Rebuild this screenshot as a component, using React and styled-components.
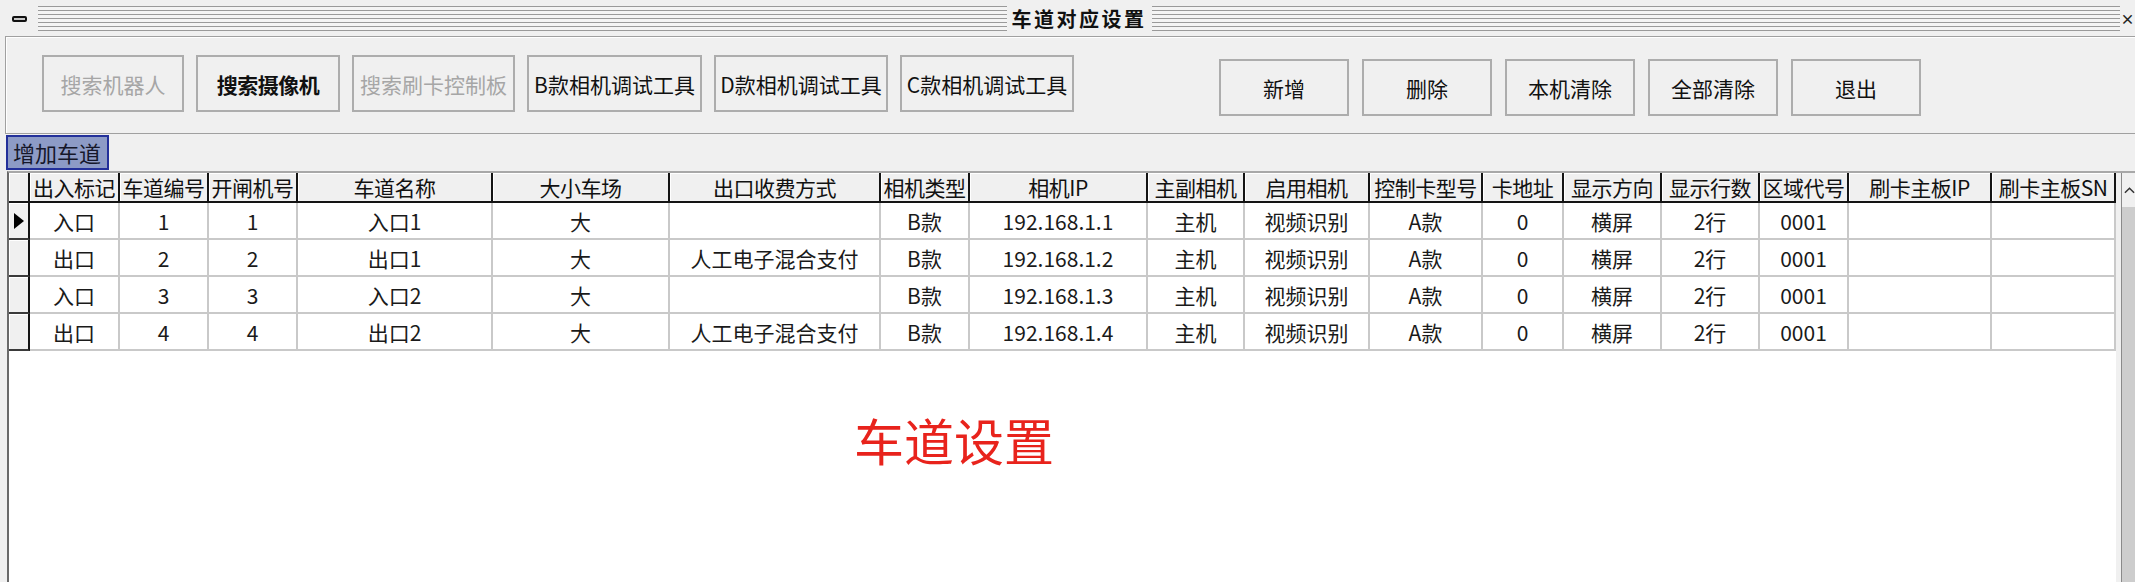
import React from "react";
import styled, { createGlobalStyle } from "styled-components";

const FONT = `"Noto Sans CJK SC", "Noto Sans", sans-serif`;

const GlobalStyle = createGlobalStyle`
  html, body { margin: 0; padding: 0; background: #f0f0f0; overflow: hidden; }
  body { font-family: ${FONT}; }
  #root { width: 2135px; height: 582px; }
  * { box-sizing: border-box; }
`;

const Window = styled.div`
  width: 2135px;
  height: 582px;
  display: flex;
  flex-direction: column;
  background: #f0f0f0;
  overflow: hidden;
`;

const TitleBar = styled.div`
  height: 36px;
  flex-shrink: 0;
  display: flex;
  align-items: center;
  padding-left: 12px;
`;

const MinButton = styled.span`
  width: 15px;
  height: 6px;
  border: 2px solid #111;
  border-radius: 2px;
  background: #c8c8c8;
  margin-right: 11px;
  margin-top: 1px;
`;

const Stripes = styled.div`
  flex: 1;
  height: 25px;
  display: flex;
  align-items: center;
  justify-content: center;
  background: repeating-linear-gradient(
    to bottom,
    #9a9a9a 0px,
    #9a9a9a 1.5px,
    #f4f4f4 1.5px,
    #f4f4f4 4px
  );
`;

const Title = styled.span`
  background: #f0f0f0;
  padding: 0 5px;
  font-size: 20px;
  font-weight: 700;
  letter-spacing: 2.5px;
  line-height: 25px;
  color: #111;
`;

const CloseGlyph = styled.span`
  width: 15px;
  text-align: center;
  font-size: 14px;
  font-weight: 700;
  color: #222;
  line-height: 25px;
`;

const Toolbar = styled.div`
  margin-left: 5px;
  height: 98px;
  flex-shrink: 0;
  display: flex;
  align-items: flex-start;
  padding: 18px 0 0 36px;
  border-top: 1px solid #a0a0a0;
  border-left: 1px solid #a0a0a0;
  border-bottom: 1px solid #a0a0a0;
  box-shadow: inset 1px 1px 0 #ffffff;
`;

const ButtonGroup = styled.div`
  display: flex;
  gap: ${(p) => p.$gap}px;
  margin-left: ${(p) => p.$offset || 0}px;
  margin-top: ${(p) => p.$drop || 0}px;
`;

const ToolButton = styled.button`
  width: ${(p) => p.$w}px;
  height: 57px;
  padding: 0;
  border: 2px solid #adadad;
  background: #f0f0f0;
  font-family: ${FONT};
  font-size: 21px;
  font-weight: ${(p) => (p.$bold ? 700 : 400)};
  color: ${(p) => (p.$disabled ? "#a6a6a6" : "#111")};
  white-space: nowrap;
  display: flex;
  align-items: center;
  justify-content: center;
  letter-spacing: ${(p) => (p.$bold ? "-0.5px" : "0")};
`;

const AddLaneTag = styled.div`
  margin: 1px 0 0 6px;
  width: 103px;
  height: 35px;
  flex-shrink: 0;
  border: 2px solid #23309a;
  background: #8d9bc6;
  color: #15172a;
  font-size: 22px;
  line-height: 30px;
  padding-left: 5px;
  white-space: nowrap;
`;

const GridFrame = styled.div`
  flex: 1;
  margin: 1px 0 0 7px;
  display: flex;
  border-top: 2px solid #a8a8a8;
  border-left: 2px solid #6a6a6a;
  min-height: 0;
`;

const GridBody = styled.div`
  position: relative;
  flex: 1;
  background: #ffffff;
`;

const COLS = [21, 90, 89, 89, 195, 177, 211, 89, 178, 97, 125, 113, 81, 98, 98, 89, 143, 124];
const TEMPLATE = COLS.map((c) => `${c}px`).join(" ");

const Row = styled.div`
  display: grid;
  grid-template-columns: ${TEMPLATE};
  height: ${(p) => p.$h}px;
`;

const HeadCell = styled.div`
  background: #f0f0f0;
  border-right: 2px solid #141414;
  border-bottom: 2px solid #141414;
  box-shadow: inset 1px 1px 0 #ffffff;
  display: flex;
  align-items: center;
  justify-content: center;
  font-size: 21px;
  color: #111;
  white-space: nowrap;
  overflow: hidden;
  letter-spacing: -0.5px;
`;

const Indicator = styled.div`
  background: #f0f0f0;
  border-right: 2px solid #141414;
  border-bottom: 2px solid #3a3a3a;
  box-shadow: inset 1px 1px 0 #ffffff;
  display: flex;
  align-items: center;
  padding-left: 5px;
`;

const Cell = styled.div`
  border-right: 2px solid #c9c9c9;
  border-bottom: 2px solid #c9c9c9;
  display: flex;
  align-items: center;
  justify-content: center;
  font-size: 21px;
  color: #1a1a1a;
  white-space: nowrap;
  overflow: hidden;
`;

const Watermark = styled.div`
  position: absolute;
  left: 845px;
  top: 241px;
  font-size: 50px;
  line-height: 50px;
  color: #e8231c;
  white-space: nowrap;
  pointer-events: none;
`;

const ScrollBar = styled.div`
  width: 14px;
  flex-shrink: 0;
  display: flex;
  flex-direction: column;
  border-left: 1px solid #8a8a8a;
  margin-left: 5px;
`;

const ScrollUp = styled.div`
  height: 34px;
  background: #f0f0f0;
  display: flex;
  align-items: center;
  justify-content: flex-start;
  padding-left: 2px;
`;

const ScrollTrack = styled.div`
  flex: 1;
  background: #cdcdcd;
`;

const HEADERS = [
  "出入标记", "车道编号", "开闸机号", "车道名称", "大小车场", "出口收费方式",
  "相机类型", "相机IP", "主副相机", "启用相机", "控制卡型号", "卡地址",
  "显示方向", "显示行数", "区域代号", "刷卡主板IP", "刷卡主板SN",
];

const ROWS = [
  ["入口", "1", "1", "入口1", "大", "", "B款", "192.168.1.1", "主机", "视频识别", "A款", "0", "横屏", "2行", "0001", "", ""],
  ["出口", "2", "2", "出口1", "大", "人工电子混合支付", "B款", "192.168.1.2", "主机", "视频识别", "A款", "0", "横屏", "2行", "0001", "", ""],
  ["入口", "3", "3", "入口2", "大", "", "B款", "192.168.1.3", "主机", "视频识别", "A款", "0", "横屏", "2行", "0001", "", ""],
  ["出口", "4", "4", "出口2", "大", "人工电子混合支付", "B款", "192.168.1.4", "主机", "视频识别", "A款", "0", "横屏", "2行", "0001", "", ""],
];

const LEFT_BUTTONS = [
  { label: "搜索机器人", w: 142, disabled: true },
  { label: "搜索摄像机", w: 144, bold: true },
  { label: "搜索刷卡控制板", w: 163, disabled: true },
  { label: "B款相机调试工具", w: 175 },
  { label: "D款相机调试工具", w: 174 },
  { label: "C款相机调试工具", w: 174 },
];

const RIGHT_BUTTONS = ["新增", "删除", "本机清除", "全部清除", "退出"];

const Pointer = () => (
  <svg width="10" height="16" viewBox="0 0 10 16">
    <polygon points="0,0 10,8 0,16" fill="#000" />
  </svg>
);

const Caret = () => (
  <svg width="12" height="8" viewBox="0 0 12 8">
    <polyline points="1,7 6,2 11,7" fill="none" stroke="#333" strokeWidth="1.6" />
  </svg>
);

export default function App() {
  return (
    <Window>
      <GlobalStyle />
      <TitleBar>
        <MinButton />
        <Stripes>
          <Title>车道对应设置</Title>
        </Stripes>
        <CloseGlyph>×</CloseGlyph>
      </TitleBar>

      <Toolbar>
        <ButtonGroup $gap={12}>
          {LEFT_BUTTONS.map((b) => (
            <ToolButton key={b.label} $w={b.w} $disabled={b.disabled} $bold={b.bold}>
              {b.label}
            </ToolButton>
          ))}
        </ButtonGroup>
        <ButtonGroup $gap={13} $offset={145} $drop={4}>
          {RIGHT_BUTTONS.map((b) => (
            <ToolButton key={b} $w={130}>
              {b}
            </ToolButton>
          ))}
        </ButtonGroup>
      </Toolbar>

      <AddLaneTag>增加车道</AddLaneTag>

      <GridFrame>
        <GridBody>
          <Row $h={30}>
            <HeadCell />
            {HEADERS.map((h) => (
              <HeadCell key={h}>{h}</HeadCell>
            ))}
          </Row>
          {ROWS.map((r, i) => (
            <Row $h={37} key={i}>
              <Indicator>{i === 0 && <Pointer />}</Indicator>
              {r.map((v, j) => (
                <Cell key={j}>{v}</Cell>
              ))}
            </Row>
          ))}
          <Watermark>车道设置</Watermark>
        </GridBody>
        <ScrollBar>
          <ScrollUp>
            <Caret />
          </ScrollUp>
          <ScrollTrack />
        </ScrollBar>
      </GridFrame>
    </Window>
  );
}
